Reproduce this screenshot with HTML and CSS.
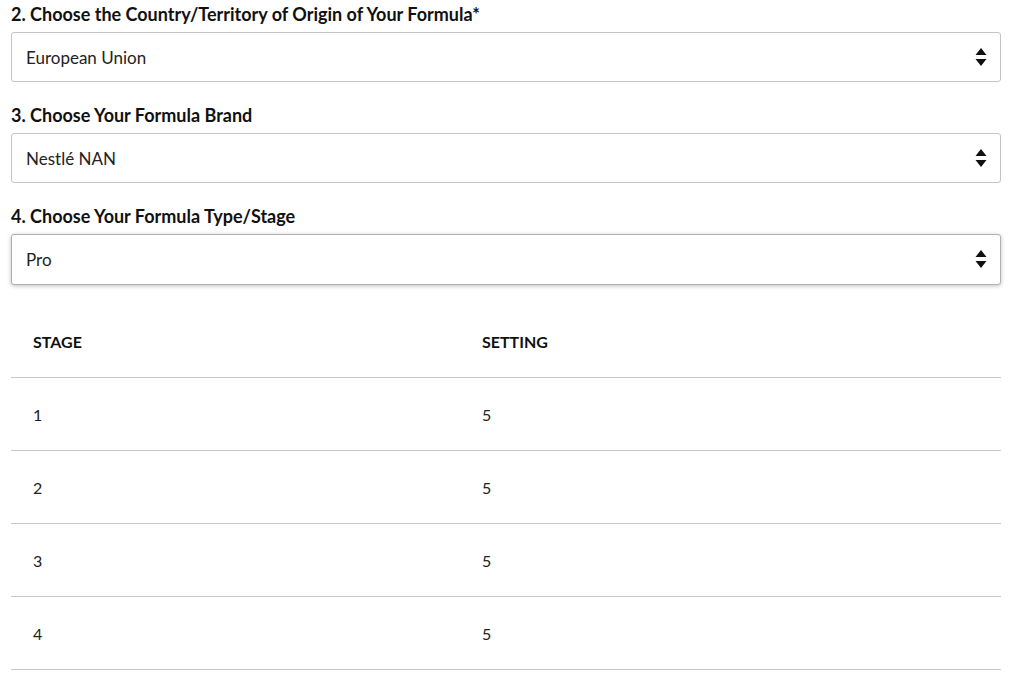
FILE: index.html
```html
<!DOCTYPE html>
<html lang="en">
<head>
    <meta charset="UTF-8">
    <meta name="viewport" content="width=device-width, initial-scale=1.0">
    <title>Formula Settings</title>
    <link rel="stylesheet" href="styles.css">
</head>
<body>
    <div class="container">
        <div class="field">
            <label for="country">2. Choose the Country/Territory of Origin of Your Formula*</label>
            <div class="select-wrap">
                <select id="country">
                    <option>European Union</option>
                </select>
                <svg class="arrows" width="12" height="18" viewBox="0 0 12 18"><path d="M6 0 L11.5 7 L0.5 7 Z M0.5 11 L11.5 11 L6 18 Z" fill="#111"/></svg>
            </div>
        </div>
        <div class="field">
            <label for="brand">3. Choose Your Formula Brand</label>
            <div class="select-wrap">
                <select id="brand">
                    <option>Nestlé NAN</option>
                </select>
                <svg class="arrows" width="12" height="18" viewBox="0 0 12 18"><path d="M6 0 L11.5 7 L0.5 7 Z M0.5 11 L11.5 11 L6 18 Z" fill="#111"/></svg>
            </div>
        </div>
        <div class="field">
            <label for="type">4. Choose Your Formula Type/Stage</label>
            <div class="select-wrap focused">
                <select id="type">
                    <option>Pro</option>
                </select>
                <svg class="arrows" width="12" height="18" viewBox="0 0 12 18"><path d="M6 0 L11.5 7 L0.5 7 Z M0.5 11 L11.5 11 L6 18 Z" fill="#111"/></svg>
            </div>
        </div>
        <table class="settings">
            <thead>
                <tr><th class="col-stage">STAGE</th><th>SETTING</th></tr>
            </thead>
            <tbody>
                <tr><td>1</td><td>5</td></tr>
                <tr><td>2</td><td>5</td></tr>
                <tr><td>3</td><td>5</td></tr>
                <tr><td>4</td><td>5</td></tr>
            </tbody>
        </table>
    </div>
</body>
</html>
```

FILE: styles.css
```css
body {
    margin: 0;
    font-family: Lato, "Open Sans", sans-serif;
    color: #111;
    background: #fff;
}
.container {
    width: 990px;
    padding: 3px 0 0 11px;
}
.field {
    margin-bottom: 22px;
}
.field label {
    display: block;
    font-weight: 700;
    font-size: 18px;
    line-height: 22px;
    margin-bottom: 7px;
}
.select-wrap {
    position: relative;
}
.select-wrap select {
    display: block;
    width: 100%;
    height: 50px;
    padding: 0 40px 0 14px;
    border: 1px solid #c4c4c4;
    border-radius: 3px;
    background: #fff;
    font-family: inherit;
    font-size: 17px;
    color: #222;
    appearance: none;
    -webkit-appearance: none;
}
.select-wrap.focused select {
    height: 51px;
    border-color: #b0b0b0;
    box-shadow: 0 1px 4px rgba(0, 0, 0, 0.25);
}
.arrows {
    position: absolute;
    right: 14px;
    top: 16px;
    pointer-events: none;
}
.settings {
    width: 100%;
    border-collapse: collapse;
    margin-top: -2px;
}
.settings th {
    text-align: left;
    font-size: 16px;
    font-weight: 700;
    height: 72px;
    padding: 0 22px;
    vertical-align: middle;
    border-bottom: 1px solid #c8c8c8;
}
.settings th.col-stage {
    width: 405px;
}
.settings td {
    height: 72px;
    padding: 0 22px;
    font-size: 16px;
    color: #222;
    border-bottom: 1px solid #c8c8c8;
}
```
